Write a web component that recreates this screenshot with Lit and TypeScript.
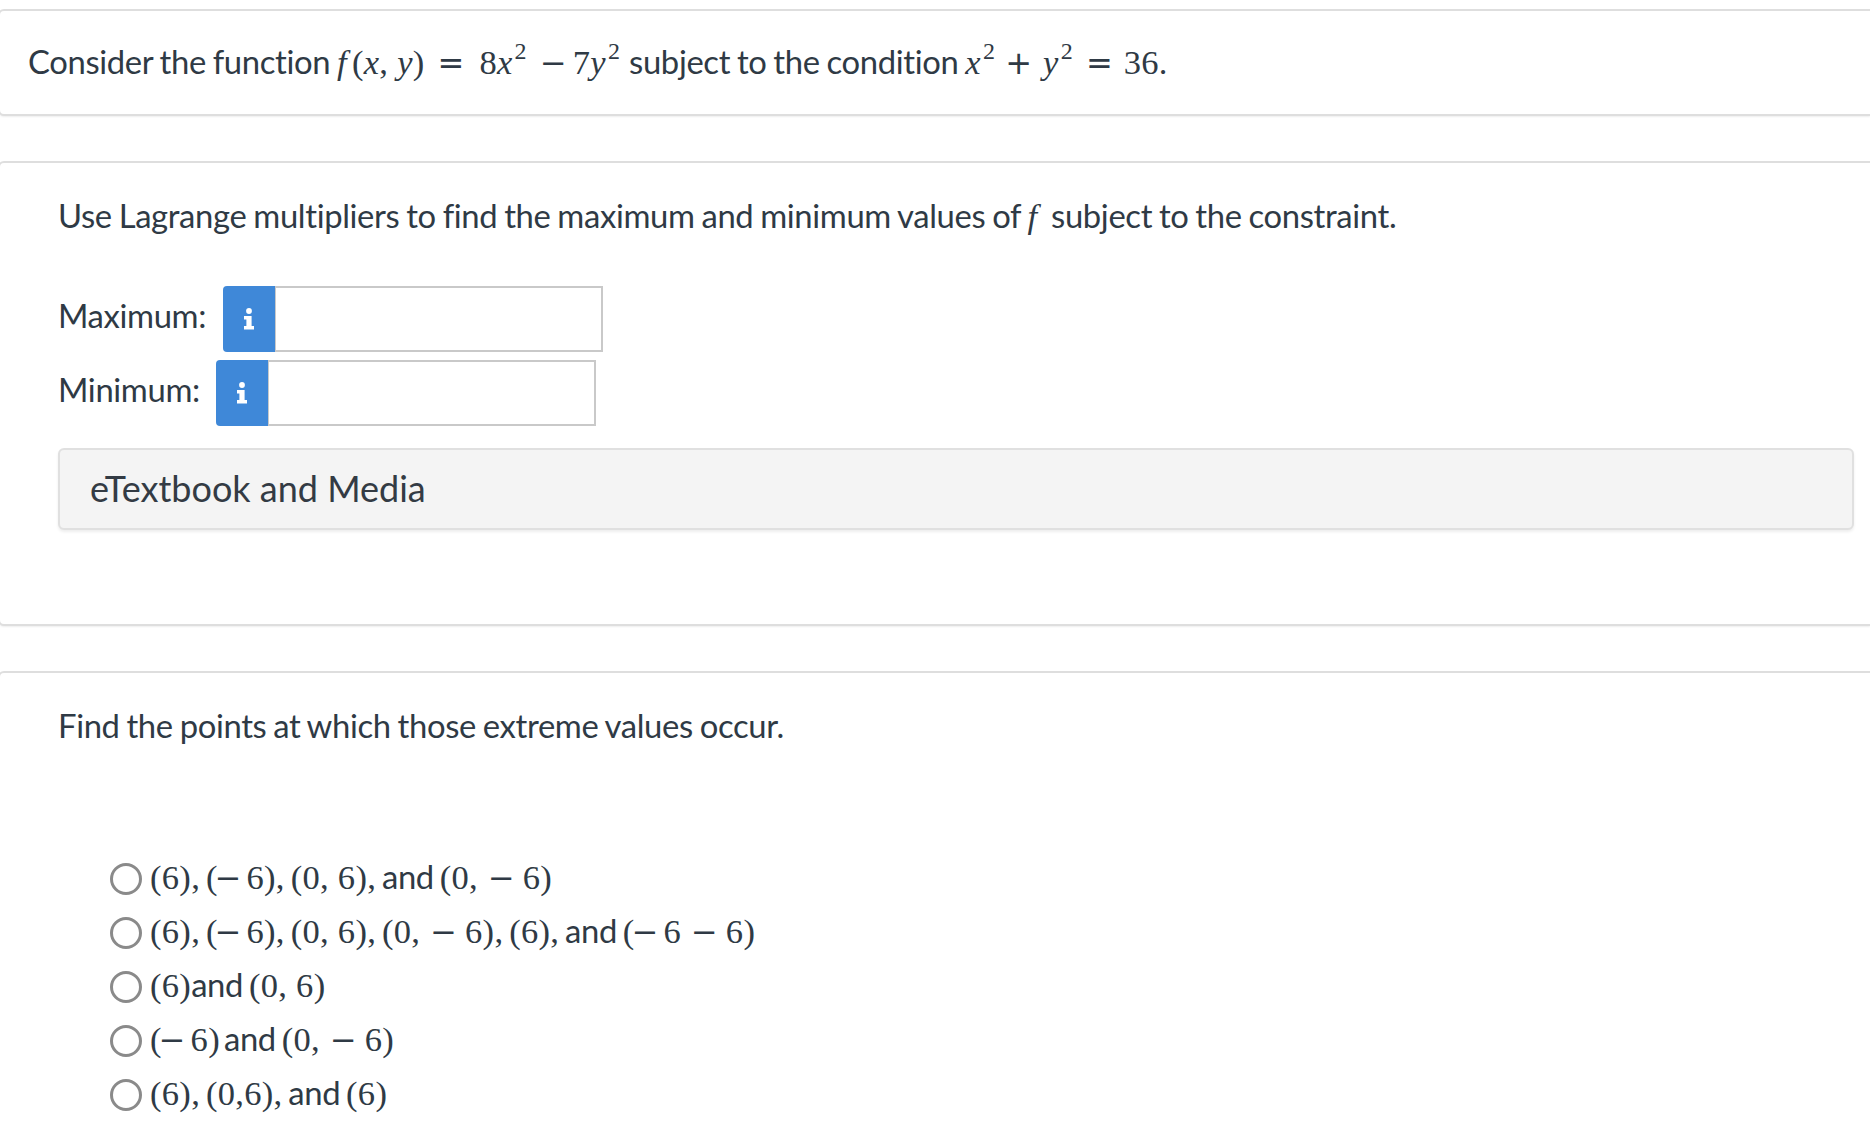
import { LitElement, html, css } from "lit";
import { customElement } from "lit/decorators.js";

const infoIcon = html`<svg class="info" viewBox="0 0 12 22" width="12" height="22" aria-hidden="true"><circle cx="6" cy="3" r="2.9" fill="#fff"/><path d="M1 8h7.6v10H11v3.4H1V18h2.4v-6.6H1z" fill="#fff"/></svg>`;

const minus = html`<span class="op sm">−</span>`;
const neg = html`<span class="op neg">−</span>`;

@customElement("app-root")
export class AppRoot extends LitElement {
  static styles = css`
    :host { display: block; width: 1870px; height: 1146px; overflow: hidden; background: #fff; box-sizing: border-box; padding-top: 9px; font-family: Lato, "Liberation Sans", sans-serif; color: #2f3a45; font-size: 32.8px; letter-spacing: -0.35px; word-spacing: -1.2px; }
    .card { margin-left: -2px; background: #fff; border: 2px solid #dedede; border-right: 0; border-radius: 6px 0 0 6px; box-sizing: border-box; box-shadow: 0 1px 2px #eee; }
    .c1 { height: 107px; padding: 0 0 0 28px; display: flex; align-items: center; margin-bottom: 45px; }
    .c2 { height: 465px; padding: 28px 0 0 58px; margin-bottom: 45px; }
    .c3 { height: 520px; padding: 28px 0 0 58px; border-bottom: 0; border-radius: 6px 0 0 0; }
    .line { line-height: 50px; white-space: pre; }
    .m { font-family: "Liberation Serif", serif; letter-spacing: 0.3px; word-spacing: 0; font-size: 34.5px; }
    .m i { font-style: italic; }
    .fi { margin-right: 5px; }
    .op { font-family: "DejaVu Sans", sans-serif; font-size: 32px; letter-spacing: 0; }
    .eq1 { margin: 0 15px 0 13px; }
    .eq2 { margin: 0 11px 0 13px; }
    .mi { margin: 0 6px 0 13px; }
    .pl { margin: 0 11px 0 10px; }
    .sm { margin: 0 8px 0 10px; }
    .neg { margin: 0 5px 0 -3px; }
    .gap { margin-left: 4px; }
    .end { margin-right: 2px; }
    sup { font-size: 24px; line-height: 0; vertical-align: 15px; margin-left: 2px; }
    .fld { display: flex; align-items: center; height: 66px; }
    .fld + .fld { margin-top: 8px; }
    .f1 { margin-top: 45px; }
    .lbl { margin-right: 16.6px; position: relative; top: -4px; }
    .btn { width: 52px; height: 66px; background: #3f88d8; border-radius: 4px 0 0 4px; display: flex; align-items: center; justify-content: center; box-sizing: border-box; }
    .input { width: 328px; height: 66px; border: 2px solid #c9c9c9; border-left-width: 1px; background: #fff; box-sizing: border-box; }
    .media { margin-top: 22px; width: 1796px; height: 82px; box-sizing: border-box; background: #f4f4f4; border: 2px solid #e0e0e0; border-radius: 6px; box-shadow: 0 2px 3px #eee; padding: 0 0 2px 30px; display: flex; align-items: center; font-size: 36px; letter-spacing: 0; word-spacing: 0; color: #333b44; }
    .opts { margin-top: 101px; padding-left: 52px; display: flex; flex-direction: column; word-spacing: -2.2px; }
    .opt { display: flex; align-items: center; height: 54px; white-space: pre; }
    .opt > .t { padding-bottom: 5px; }
    .radio { width: 32px; height: 32px; box-sizing: border-box; border: 3px solid #8a8a8a; border-radius: 50%; margin-right: 8px; flex: none; background: #fff; }
  `;

  render() {
    return html`
      <section class="card c1"><div class="line">Consider the function <span class="m"><i class="fi">f</i>(<i>x</i>, <i>y</i>)<span class="op eq1">=</span>8<i>x</i><sup>2</sup><span class="op mi">−</span>7<i>y</i><sup class="end">2</sup></span> subject to the condition <span class="m"><i>x</i><sup>2</sup><span class="op pl">+</span><i>y</i><sup>2</sup><span class="op eq2">=</span>36.</span></div></section>
      <section class="card c2">
        <div class="line">Use Lagrange multipliers to find the maximum and minimum values of <span class="m"><i>f</i></span>  subject to the constraint.</div>
        <div class="fld f1"><span class="lbl">Maximum:</span><span class="btn">${infoIcon}</span><span class="input"></span></div>
        <div class="fld"><span class="lbl">Minimum:</span><span class="btn">${infoIcon}</span><span class="input"></span></div>
        <div class="media">eTextbook and Media</div>
      </section>
      <section class="card c3">
        <div class="line">Find the points at which those extreme values occur.</div>
        <div class="opts">
          <label class="opt"><span class="radio"></span><span class="t"><span class="m">(6),</span> <span class="m">(${neg}6),</span> <span class="m">(0, 6),</span> and <span class="m">(0,${minus}6)</span></span></label>
          <label class="opt"><span class="radio"></span><span class="t"><span class="m">(6),</span> <span class="m">(${neg}6),</span> <span class="m">(0, 6),</span> <span class="m">(0,${minus}6),</span> <span class="m">(6),</span> and <span class="m">(${neg}6${minus}6)</span></span></label>
          <label class="opt"><span class="radio"></span><span class="t"><span class="m">(6)</span>and <span class="m">(0, 6)</span></span></label>
          <label class="opt"><span class="radio"></span><span class="t"><span class="m">(${neg}6)</span><span class="gap">and</span> <span class="m">(0,${minus}6)</span></span></label>
          <label class="opt"><span class="radio"></span><span class="t"><span class="m">(6),</span> <span class="m">(0,6),</span> and <span class="m">(6)</span></span></label>
        </div>
      </section>
    `;
  }
}
